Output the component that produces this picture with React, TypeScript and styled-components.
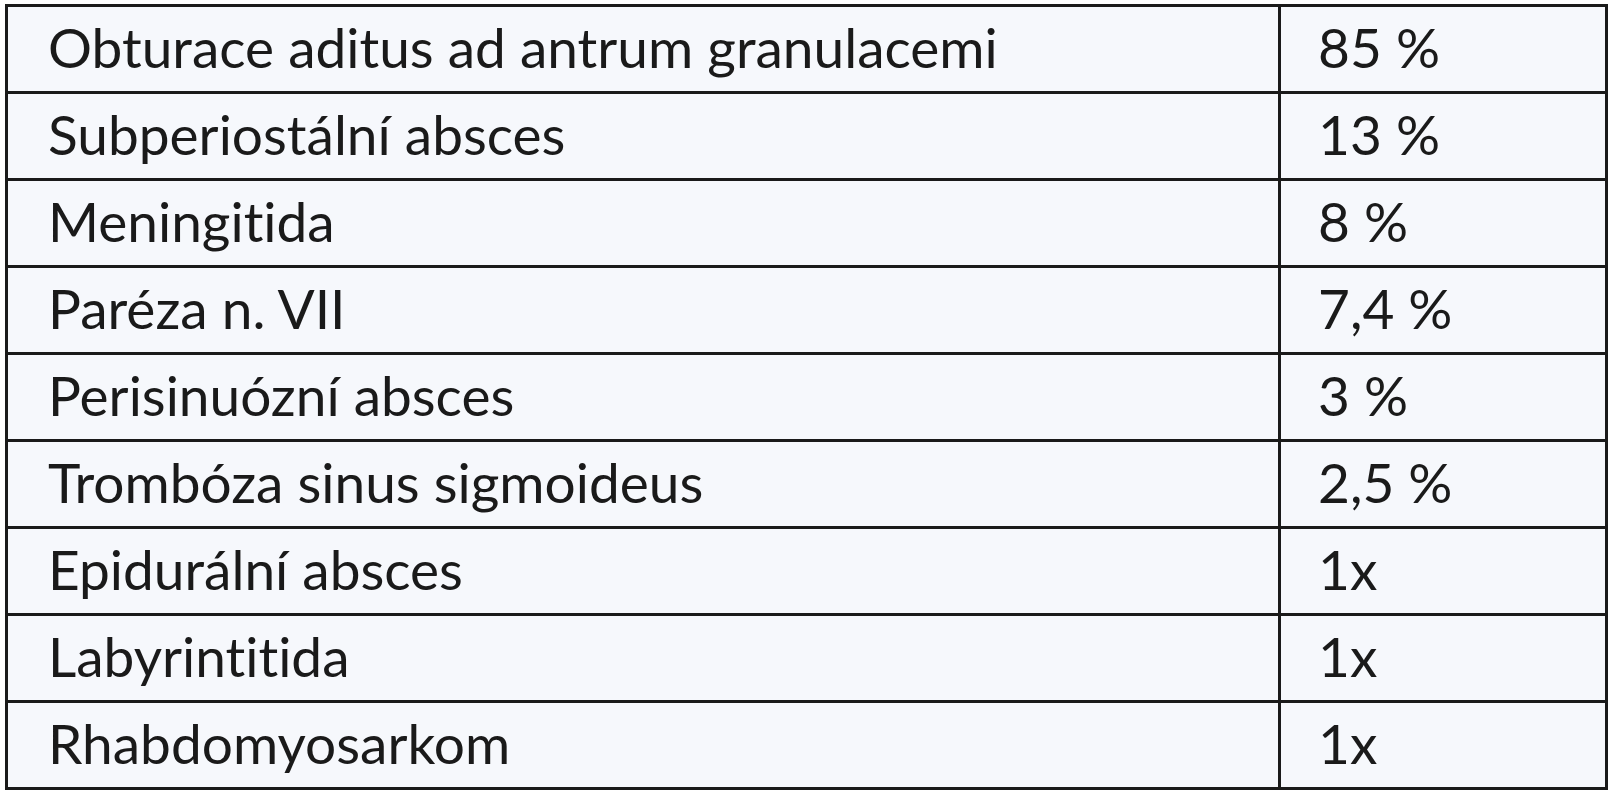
import React from 'react';
import styled, { createGlobalStyle } from 'styled-components';

const GlobalStyle = createGlobalStyle`
  html, body {
    margin: 0;
    padding: 0;
    background: #ffffff;
  }
`;

const Page = styled.div`
  padding: 4px 0 0 5px;
`;

const Table = styled.table`
  width: 1603px;
  border-collapse: collapse;
  background: #f6f8fc;
  border: 3px solid #1a1a1a;
  font-family: Lato, "Liberation Sans", sans-serif;
  font-weight: 400;
  font-size: 55px;
  font-variant-ligatures: none;
  color: #1a1a1a;
`;

const Row = styled.tr`
  height: 87px;
`;

const Cell = styled.td<{ $value?: boolean }>`
  border: 3px solid #1a1a1a;
  padding: 0 0 4px ${({ $value }) => ($value ? '37px' : '40px')};
  width: ${({ $value }) => ($value ? '287px' : 'auto')};
  white-space: nowrap;
  vertical-align: middle;
`;

const rows: [string, string][] = [
  ['Obturace aditus ad antrum granulacemi', '85 %'],
  ['Subperiostální absces', '13 %'],
  ['Meningitida', '8 %'],
  ['Paréza n. VII', '7,4 %'],
  ['Perisinuózní absces', '3 %'],
  ['Trombóza sinus sigmoideus', '2,5 %'],
  ['Epidurální absces', '1x'],
  ['Labyrintitida', '1x'],
  ['Rhabdomyosarkom', '1x'],
];

const App: React.FC = () => (
  <Page>
    <GlobalStyle />
    <Table>
      <tbody>
        {rows.map(([name, value]) => (
          <Row key={name}>
            <Cell>{name}</Cell>
            <Cell $value>{value}</Cell>
          </Row>
        ))}
      </tbody>
    </Table>
  </Page>
);

export default App;
